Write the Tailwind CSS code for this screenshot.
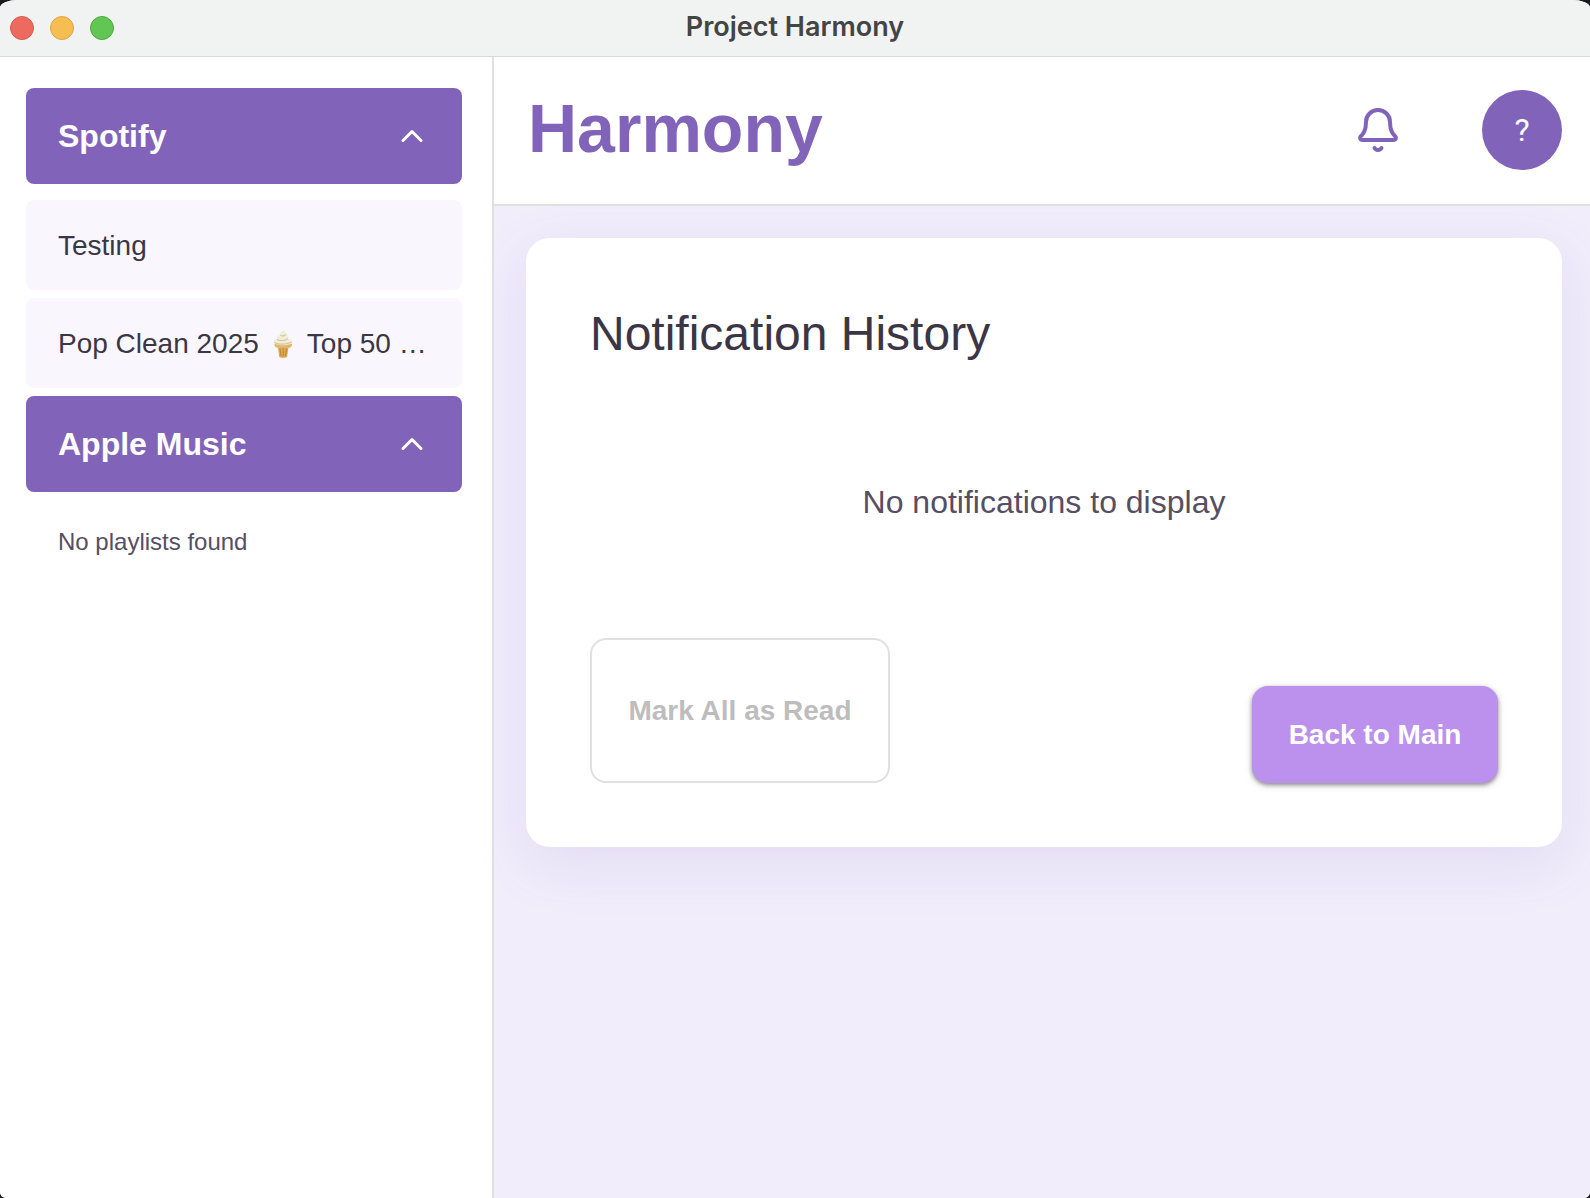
<!DOCTYPE html>
<html lang="en">
<head>
<meta charset="utf-8">
<title>Project Harmony</title>
<script src="https://cdn.jsdelivr.net/npm/@tailwindcss/browser@4"></script>
</head>
<body class="bg-[#1c1a1f] font-['Liberation_Sans',Arial,sans-serif] text-[#3b3646]">
<div class="flex min-h-screen flex-col overflow-hidden rounded-t-[18px_8px] rounded-b-md bg-white">

  <!-- Window title bar -->
  <div class="grid h-14 grid-cols-[1fr_auto_1fr] items-center bg-[#f1f3f3] px-[10px]">
    <div class="flex gap-4">
      <button type="button" aria-label="Close" class="size-6 rounded-full border border-[#d9594f] bg-[#ed6a5f]"></button>
      <button type="button" aria-label="Minimize" class="size-6 rounded-full border border-[#dca541] bg-[#f6be50]"></button>
      <button type="button" aria-label="Zoom" class="size-6 rounded-full border border-[#50a73f] bg-[#62c655]"></button>
    </div>
    <div class="pb-0.5 font-['Inter',sans-serif] text-[27px] leading-8 font-semibold text-[#444444]">Project Harmony</div>
  </div>

  <div class="flex flex-1 border-t border-[#d9d9d9]">
    <!-- Playlists -->
    <aside class="flex w-[494px] shrink-0 flex-col border-r-2 border-[#e0e0e0] bg-white pt-[31px] pr-[30px] pl-[26px]">
      <button type="button" aria-expanded="true" class="flex h-24 items-center justify-between rounded-lg bg-[#8164b9] px-8 text-[32px] font-bold text-white">
        Spotify
        <svg class="size-9" viewBox="0 0 24 24" fill="none" stroke="currentColor" stroke-width="2" stroke-linecap="round" stroke-linejoin="round" aria-hidden="true"><path d="m18 15-6-6-6 6"/></svg>
      </button>
      <ul class="mt-4 flex flex-col gap-2 text-[28px] leading-10">
        <li><a href="#testing" class="flex h-[90px] items-center rounded-lg bg-[#f9f7fd] px-8 pt-0.5">Testing</a></li>
        <li>
          <a href="#pop-clean" class="flex h-[90px] items-center gap-[9px] rounded-lg bg-[#f9f7fd] px-8 pt-0.5 whitespace-nowrap">
            <span>Pop Clean 2025</span>
            <svg class="size-[30px]" viewBox="0 0 30 30" role="img" aria-label="Soft ice cream">
              <path d="M9.500 15 11.300 28c.2 1 7.400 1 7.800 0L21 15z" fill="#dda650"/>
              <path d="M6.500 14.500h17.500c.4 2.500-1.400 4-3.200 4.500H9.500c-1.800-.5-3.400-2-3-4.500z" fill="#e6b566"/>
              <path d="m12 19.500 1 7.500m2.200-7.500V27m3.200-7.500-1 7.500" stroke="#bd812f" stroke-width=".8"/>
              <path d="M6 13c-.4-2 1.500-3.200 2.900-3.200-.3-2.100 1.300-3.600 3.200-3.900C12 3.500 13.500 1.500 16.500 1c-.4 1.500 1.700 2.200 1.800 4.200 2.200.6 2.700 2.600 2.100 4.200 2 .2 4.100 1.800 3.700 3.800-.4 4-17.500 4.200-18.100-.2z" fill="#f1edd9"/>
              <path d="M9 10.500c3 2 8.500 1.200 11-1M12.300 6.200c1.500 1.400 4.200.8 5.600-.7M6.700 13.500c4 2.500 12.500 2 16.800-.6" fill="none" stroke="#c9bf98" stroke-width="1"/>
            </svg>
            <span>Top 50 …</span>
          </a>
        </li>
      </ul>
      <button type="button" aria-expanded="true" class="mt-2 flex h-24 items-center justify-between rounded-lg bg-[#8164b9] px-8 text-[32px] font-bold text-white">
        Apple Music
        <svg class="size-9" viewBox="0 0 24 24" fill="none" stroke="currentColor" stroke-width="2" stroke-linecap="round" stroke-linejoin="round" aria-hidden="true"><path d="m18 15-6-6-6 6"/></svg>
      </button>
      <p class="mt-8 px-8 text-2xl leading-9 text-[#564e63]">No playlists found</p>
    </aside>

    <div class="flex min-w-0 flex-1 flex-col">
      <header class="flex h-[149px] items-center justify-between border-b-2 border-[#e0e0e0] bg-white pr-7 pb-0.5 pl-[34px]">
        <h1 class="pb-1 text-[68px] leading-20 font-bold text-[#8164b9]">Harmony</h1>
        <div class="flex items-center gap-16">
          <button type="button" aria-label="Notifications" class="flex size-20 items-center justify-center text-[#8164b9]">
            <svg class="size-12" viewBox="0 0 24 24" fill="none" stroke="currentColor" stroke-width="2" stroke-linecap="round" stroke-linejoin="round" aria-hidden="true"><path d="M10.268 21a2 2 0 0 0 3.464 0"/><path d="M3.262 15.326A1 1 0 0 0 4 17h16a1 1 0 0 0 .74-1.673C19.41 13.956 18 12.499 18 8A6 6 0 0 0 6 8c0 4.499-1.411 5.956-2.738 7.326"/></svg>
          </button>
          <button type="button" aria-label="Help" class="flex size-20 items-center justify-center rounded-full bg-[#8164b9] font-['Roboto',sans-serif] text-[32px] text-white">?</button>
        </div>
      </header>

      <main class="flex-1 overflow-hidden bg-[#f1edfb] pt-8 pr-7 pb-8 pl-8">
        <section class="rounded-3xl bg-white p-16 shadow-[0_16px_56px_#8164b921]">
          <h2 class="text-5xl leading-16">Notification History</h2>
          <p class="py-28 text-center text-[32px] leading-12 text-[#564e63]">No notifications to display</p>
          <div class="flex items-end justify-between">
            <button type="button" disabled class="h-[145px] w-[300px] rounded-2xl border-2 border-[#e0e0e0] text-[28px] font-bold text-[#bdbdbd]">Mark All as Read</button>
            <button type="button" class="h-[97px] w-[246px] rounded-2xl bg-[#bb91ed] text-[28px] font-bold text-white shadow-[0_2px_4px_#00000066,0_2px_10px_#0000001f]">Back to Main</button>
          </div>
        </section>
      </main>
    </div>
  </div>
</div>
</body>
</html>
